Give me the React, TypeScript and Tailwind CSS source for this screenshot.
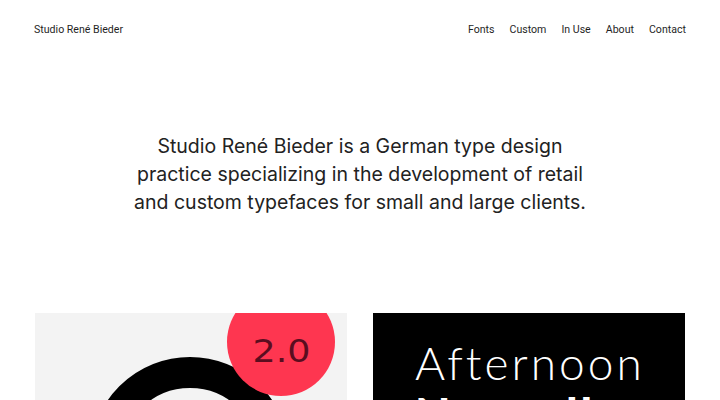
const navItems = ["Fonts", "Custom", "In Use", "About", "Contact"];

export default function App() {
  return (
    <div className="min-h-screen bg-white text-[#1f1f1f] font-['Inter',sans-serif]">
      {/* header */}
      <header className="flex items-center justify-between px-[34px] pt-[22px] font-['Roboto',sans-serif] text-[10.6px] leading-[16px]">
        <span>Studio René Bieder</span>
        <nav className="flex gap-[15px]">
          {navItems.map((item) => (
            <a key={item} href="#" className="text-[#1f1f1f]">
              {item}
            </a>
          ))}
        </nav>
      </header>

      {/* intro */}
      <section className="pt-[94px] flex justify-center">
        <p className="w-[470px] text-center text-[19.5px] leading-[28px] text-[#222]">
          Studio René Bieder is a German type design practice specializing in the development of retail and custom
          typefaces for small and large clients.
        </p>
      </section>

      {/* font cards */}
      <section className="grid grid-cols-2 gap-[26px] px-[35px] pt-[97px]">
        <div className="relative h-[312px] overflow-hidden bg-[#f3f3f3]">
          <svg className="absolute inset-0" width="312" height="312" viewBox="0 0 312 312">
            <circle cx="155" cy="144" r="84.5" fill="none" stroke="#000" strokeWidth="31" />
          </svg>
          <div className="absolute left-[192px] top-[-25px] flex h-[108px] w-[108px] items-center justify-center rounded-full bg-[#fe3650]">
            <span className="mt-[18px] scale-x-[1.14] font-['DejaVu_Sans',sans-serif] text-[32px] font-medium leading-none text-[#5a0d1f]">
              2.0
            </span>
          </div>
        </div>
        <div className="h-[312px] overflow-hidden bg-black px-[42px] pt-[24px] text-white">
          <div className="font-['Lato',sans-serif] text-[46px] font-light leading-[51px] tracking-[3px]">Afternoon</div>
          <div className="font-['Lato',sans-serif] text-[46px] font-black leading-[51px] tracking-[3px]">Nouvelle</div>
        </div>
      </section>
    </div>
  );
}
